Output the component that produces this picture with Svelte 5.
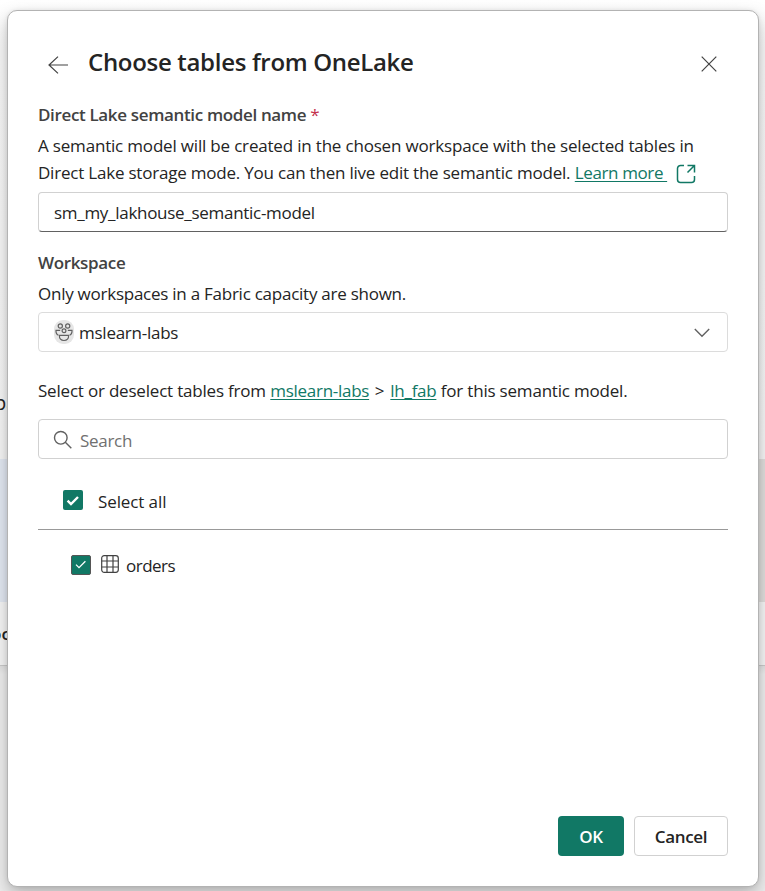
<script>
  let modelName = $state('sm_my_lakhouse_semantic-model');
  let search = $state('');
</script>

<div class="page">
  <div class="backdrop" aria-hidden="true">
    <div class="back-top"><span>pa</span></div>
    <div class="back-band"></div>
    <div class="back-card"><span>oc</span></div>
    <div class="back-rest"></div>
  </div>

  <div class="dialog" role="dialog" aria-labelledby="dialog-title">
    <header>
      <button class="icon-button back" aria-label="Back">
        <svg width="22" height="20" viewBox="0 0 22 20"><path d="M11 1.6 2 10l9 8.4M2 10h19" /></svg>
      </button>
      <h1 id="dialog-title"><span class="t-title">Choose tables from OneLake</span></h1>
      <button class="icon-button close" aria-label="Close">
        <svg width="16" height="16" viewBox="0 0 16 16"><path d="m.7.7 14.6 14.6M15.3.7.7 15.3" /></svg>
      </button>
    </header>

    <div class="label"><span class="t-name">Direct Lake semantic model name</span> <b>*</b></div>
    <div class="text intro">
      <span class="t-line1">A semantic model will be created in the chosen workspace with the selected tables in</span><br />
      <span class="t-line2">Direct Lake storage mode. You can then live edit the semantic model.</span>
      <a class="t-more" href="#learn">Learn more&nbsp;</a>
      <svg class="external" width="20" height="20" viewBox="0 0 20 20"><path d="M8 1.5H4.5a3 3 0 0 0-3 3v11a3 3 0 0 0 3 3h11a3 3 0 0 0 3-3V12M11.5 1.5h7v7M18.2 1.8 11.5 8.5" /></svg>
    </div>
    <div class="field name-field"><input class="t-input" aria-label="Model name" bind:value={modelName} /></div>

    <div class="label workspace"><span class="t-ws">Workspace</span></div>
    <div class="text"><span class="t-only">Only workspaces in a Fabric capacity are shown.</span></div>
    <div class="field select">
      <svg class="people" width="20" height="24" viewBox="0 0 20 24">
        <rect width="20" height="24" rx="9" />
        <circle cx="6.3" cy="6" r="2.1" /><circle cx="13.7" cy="6" r="2.1" /><circle cx="10" cy="10.8" r="1.9" />
        <path d="M6.2 10.3H2c-.2 2.6.8 4.3 2.4 4.9M13.8 10.3H18c.2 2.6-.8 4.3-2.4 4.9M5.4 15.4h9.2c.2 3.2-1.5 5.1-4.6 5.1s-4.8-1.9-4.6-5.1Z" />
      </svg>
      <span class="t-labs">mslearn-labs</span>
      <svg class="chevron" width="16" height="10" viewBox="0 0 16 10"><path d="m.8 1 7.2 7.2L15.2 1" /></svg>
    </div>

    <div class="text crumbs">
      <span class="t-from">Select or deselect tables from</span>
      <a class="t-link1" href="#workspace">mslearn-labs</a>
      <span class="gt">&gt;</span>
      <a class="t-link2" href="#lakehouse">lh_fab</a>
      <span class="t-for">for this semantic model.</span>
    </div>
    <div class="field search">
      <svg width="20" height="20" viewBox="0 0 20 20"><circle cx="7.8" cy="7.8" r="6.3" /><path d="m12.3 12.3 6 6" /></svg>
      <input class="t-search" placeholder="Search" bind:value={search} />
    </div>

    <div class="row all">
      <svg class="check" width="20" height="20" viewBox="0 0 20 20"><rect width="20" height="20" rx="2" /><path d="m4.6 10.6 3.4 3.4 7-7" /></svg>
      <span class="t-all">Select all</span>
    </div>
    <div class="row item">
      <svg class="check thin" width="20" height="20" viewBox="0 0 20 20"><rect x=".5" y=".5" width="19" height="19" rx="1.5" /><path d="m5 9.6 3 3 6.4-6.4" /></svg>
      <svg class="grid" width="18" height="18" viewBox="0 0 18 18"><rect x=".7" y=".7" width="16.6" height="16.6" rx="2.5" /><path d="M6 .7v16.6M12 .7v16.6M.7 6h16.6M.7 12h16.6" /></svg>
      <span class="t-orders">orders</span>
    </div>

    <footer>
      <button class="ok"><span class="t-ok">OK</span></button>
      <button class="cancel"><span class="t-cancel">Cancel</span></button>
    </footer>
  </div>
</div>

<style>
  :global(body) { margin: 0; }
  * { box-sizing: border-box; }
  .page {
    position: relative; width: 765px; height: 891px; overflow: hidden; padding: 10px 6px 3px 7px;
    font: 17px/28px "Open Sans", "Noto Sans", sans-serif; color: #242424; background: #f5f5f5;
  }
  .backdrop { position: absolute; inset: 0; display: flex; flex-direction: column; font-weight: 600; }
  .backdrop span { display: block; white-space: nowrap; }
  .back-top { height: 459px; background: linear-gradient(#fff, #fafafa 50px, #f8f8f8); }
  .back-top span { margin: 389px 0 0 -6px; font-size: 20px; font-weight: 400; }
  .back-band { height: 143px; background: linear-gradient(90deg, #e5ebf5 50%, #e2e0de 50%); }
  .back-card { height: 64px; background: #f8f8f8; border-bottom: 1px solid #ccc; }
  .back-card span { margin: 18px 0 0 -9px; font-size: 17px; }
  .back-rest { flex: 1; background: linear-gradient(#e4e4e4, #f0f0f0 8px); }
  .dialog {
    position: relative; width: 752px; height: 877px; padding: 29px 30px 30px; display: flex; flex-direction: column;
    background: #fff; border: 1px solid #b3b3b3; border-radius: 10px;
    box-shadow: 0 8px 18px rgba(0, 0, 0, .25), 0 0 4px rgba(0, 0, 0, .08);
  }
  button { font: inherit; color: inherit; padding: 0; border: 0; background: none; }
  svg { display: block; flex: none; fill: none; stroke: #424242; stroke-width: 1.2; }
  header { display: flex; align-items: center; height: 48px; padding: 0 11.5px 2px 9px; }
  .back { margin-top: 3px; }
  .close { margin-top: 1px; }
  h1 { flex: 1; margin: -2px 0 0 19px; font-size: 24px; line-height: 32px; font-weight: 600; letter-spacing: -.31px; }
  .label { height: 27px; margin-top: 13px; line-height: 27px; font-weight: 600; color: #424242; white-space: nowrap; letter-spacing: -.35px; }
  .label b { font-weight: 400; color: #c4314b; }
  .text { white-space: nowrap; line-height: 27px; }
  .intro { height: 54px; margin-top: 4px; }
  .t-line1 { letter-spacing: -.185px; }
  .t-line2 { letter-spacing: -.21px; }
  .t-more { letter-spacing: -.38px; }
  .t-only { letter-spacing: -.25px; }
  .t-labs { letter-spacing: -.25px; margin-top: 1px; }
  .t-from, .t-for { letter-spacing: -.2px; }
  .t-link1, .t-link2 { letter-spacing: -.28px; }
  .t-all { letter-spacing: -.1px; }
  .t-orders { letter-spacing: -.5px; }
  .gt { margin: 0 1.3px; }
  .external { display: inline-block; vertical-align: -5px; margin-left: 4px; stroke: #117865; stroke-width: 1.5; }
  a { color: #117865; text-decoration: underline; text-underline-offset: 2px; text-decoration-thickness: 1px; }
  .field { display: flex; align-items: center; height: 40px; flex: none; border: 1px solid #d1d1d1; border-radius: 4px; }
  input { flex: 1; min-width: 0; padding: 2px 0 0; border: 0; outline: 0; background: none; font: inherit; color: inherit; letter-spacing: -.29px; }
  input::placeholder { color: #707070; opacity: 1; }
  .name-field { margin-top: 6px; padding-left: 15px; border-bottom-color: #616161; }
  .workspace { margin-top: 17px; margin-bottom: 4px; }
  .select { margin-top: 5px; padding: 0 17px 0 15px; border-color: #dcdcdc; }
  .people { stroke: #616161; stroke-width: 1.2; margin: -1px 5px 0 0; }
  .people rect { fill: #e6e6e6; stroke: none; }
  .chevron { margin-left: auto; margin-top: 1px; stroke: #616161; stroke-width: 1.4; }
  .crumbs { margin-top: 25px; height: 28px; }
  .search { margin-top: 14px; padding-left: 14px; }
  .search svg { margin: 1px 7px 0 0; stroke: #616161; stroke-width: 1.4; }
  .search input { padding-top: 3px; }
  .row { display: flex; align-items: center; }
  .all { height: 71px; padding: 12px 0 0 25px; border-bottom: 1px solid #999; }
  .check { fill: none; }
  .check rect { fill: #117865; stroke: none; }
  .check path { stroke: #fff; stroke-width: 2.4; }
  .check.thin rect { stroke: #555; stroke-width: 1; }
  .check.thin path { stroke-width: 1.3; }
  .all span { margin: 3px 0 0 15px; }
  .item { margin-top: 20px; padding-left: 33px; }
  .grid { margin: -2px 7px 0 10px; }
  .item span { margin-top: 2px; }
  footer { display: flex; justify-content: flex-end; gap: 10px; margin-top: auto; }
  footer button { height: 40px; border-radius: 4px; font-weight: 600; }
  footer span { position: relative; top: 1px; letter-spacing: -.3px; }
  .ok { width: 66px; background: #117865; color: #fff; }
  .cancel { width: 94px; border: 1px solid #d1d1d1; }
</style>
